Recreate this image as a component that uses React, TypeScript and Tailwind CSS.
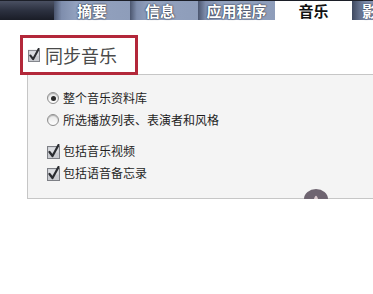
import React from 'react';

const tabs = [
  { label: '摘要', w: 'w-[76px]', pad: 'justify-center' },
  { label: '信息', w: 'w-[68px]', pad: 'justify-center pr-[8px]' },
  { label: '应用程序', w: 'w-[77px]', pad: 'justify-center' },
];

function Radio({ checked }: { checked?: boolean }) {
  return (
    <span className="w-[12px] h-[12px] rounded-full border border-[#8e8e8e] bg-gradient-to-b from-[#e6e6e6] to-[#ffffff] flex items-center justify-center shrink-0 shadow-[inset_0_1px_1px_rgba(0,0,0,0.25)]">
      {checked && <span className="w-[5px] h-[5px] rounded-full bg-[#2b2b2b]" />}
    </span>
  );
}

function Check({ size = 13 }: { size?: number }) {
  return (
    <svg width={size} height={size + 2} viewBox="0 0 13 15" className="shrink-0">
      <rect x="0.5" y="2.5" width="12" height="12" fill="#c9cbd0" stroke="#7d7f85" />
      <rect x="1.5" y="3.5" width="10" height="5" fill="#dcdee2" />
      <path d="M2.5 8 L5.5 12 L11.5 1" fill="none" stroke="#2a2c30" strokeWidth="2.2" strokeLinecap="round" strokeLinejoin="round" />
    </svg>
  );
}

export default function App() {
  return (
    <div className="w-[373px] h-[294px] bg-white overflow-hidden font-['Noto_Sans_CJK_SC','Noto_Sans',sans-serif]">
      {/* tab strip */}
      <div className="flex h-[20px] w-[420px] border-t border-[#1c1f28]">
        <div className="w-[54px] bg-gradient-to-b from-[#4a5062] via-[#2c3140] to-[#1a1d27]" />
        {tabs.map((t) => (
          <div
            key={t.label}
            className={`${t.w} ${t.pad} flex bg-[linear-gradient(to_right,#4b566f_0%,#7f8ead_10%,#93a2bf_30%,#8e9dba_100%)] text-white text-[15px] font-bold leading-[19px] [text-shadow:0_0_2px_#2a3040,0_0_1px_#2a3040]`}
          >
            {t.label}
          </div>
        ))}
        <div className="w-[77px] flex justify-center bg-white text-[#111] text-[15px] font-bold leading-[19px]">
          音乐
        </div>
        <div className="flex-1 flex pl-[10px] bg-[linear-gradient(to_right,#3f4960_0%,#7f8ead_20%,#93a2bf_60%)] text-white text-[15px] font-bold leading-[19px] [text-shadow:0_0_2px_#2a3040]">
          影
        </div>
      </div>

      {/* highlighted sync option */}
      <div className="relative z-10 mt-[15px] ml-[20px] w-[118px] h-[40px] border-[3px] border-[#b3283a] bg-white flex items-center pl-[5px] gap-[5px]">
        <Check size={12} />
        <span className="text-[18px] leading-none text-[#4a4a4a]">同步音乐</span>
      </div>

      {/* group panel */}
      <div className="relative -mt-[1px] ml-[27px] w-[360px] h-[125px] border-l border-t border-b border-[#c6c6c6] bg-[#f4f4f4] pt-[12px] pl-[19px] text-[12px] text-[#1e1e1e]">
        <div className="flex flex-col">
          <div className="h-[22px] flex items-center gap-[4px]">
            <Radio checked />
            <span>整个音乐资料库</span>
          </div>
          <div className="h-[22px] flex items-center gap-[4px]">
            <Radio />
            <span>所选播放列表、表演者和风格</span>
          </div>
          <div className="h-[22px] mt-[9px] flex items-center gap-[3px]">
            <Check />
            <span>包括音乐视频</span>
          </div>
          <div className="h-[22px] flex items-center gap-[3px]">
            <Check />
            <span>包括语音备忘录</span>
          </div>
        </div>
        <svg width="26" height="10" viewBox="0 0 26 10" className="absolute left-[275px] bottom-[-1px]">
          <path d="M1 10 A12 10 0 0 1 25 10 Z" fill="#6e6470" />
          <path d="M11 10 A2.5 8 0 0 1 15 10 Z" fill="#d8c8cc" />
        </svg>
      </div>
    </div>
  );
}
